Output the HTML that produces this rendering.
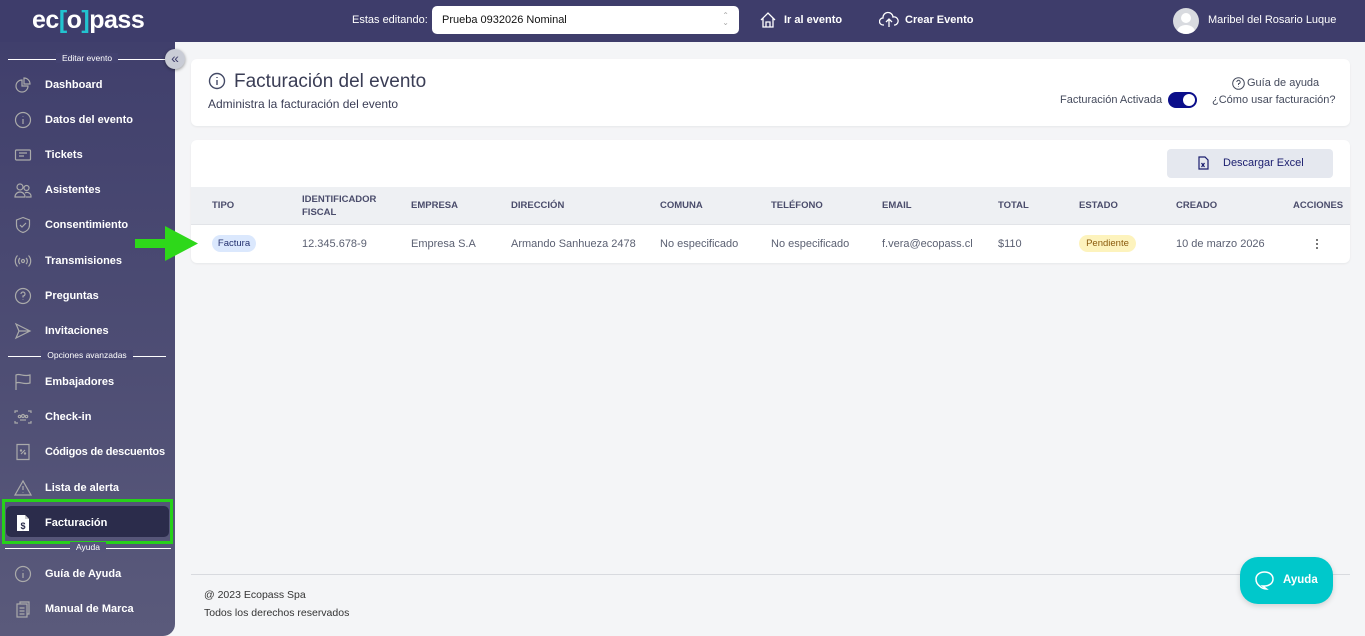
<!DOCTYPE html>
<html><head><meta charset="utf-8"><style>
*{box-sizing:border-box;margin:0;padding:0}
body{width:1365px;height:636px;overflow:hidden;background:#f4f5f7;font-family:"Liberation Sans",sans-serif;position:relative;color:#374151}
.hdr{position:absolute;left:0;top:0;width:1365px;height:42px;background:#3e3d6b}
.logo{position:absolute;left:32px;top:6px;color:#fff;font-size:25px;font-weight:bold;letter-spacing:-0.5px}
.logo b{color:#22c3d0}
.side{position:absolute;left:0;top:42px;width:175px;height:594px;background:linear-gradient(#403f6c,#5a5a7b);border-bottom-right-radius:12px}
.sec{position:absolute;left:8px;width:158px;height:12px;font-size:8.5px;color:#fff;text-align:center}
.sec:before{content:"";position:absolute;left:0;right:0;top:6px;border-top:1px solid #fff}
.sec span{position:relative;background:#434270;padding:0 6px}
.it{position:absolute;left:0;width:175px;height:30px;display:flex;align-items:center;color:#fff;font-size:11px;font-weight:bold}
.it svg{position:absolute;left:14px;width:18px;height:18px}
.it span{position:absolute;left:45px;white-space:nowrap}
.act{position:absolute;left:2px;top:499px;width:171px;height:45px;border:3px solid #27d11a}
.act div{position:absolute;left:1px;top:4px;width:163px;height:31px;background:#2b2c4b;border-radius:5px}
.card{position:absolute;background:#fff;border-radius:6px;box-shadow:0 1px 2px rgba(0,0,0,.06)}
.th{position:absolute;font-size:9.5px;font-weight:bold;color:#4a4c6b;line-height:13px}
.td{position:absolute;font-size:11px;color:#5b6072;top:238px}
</style></head><body>
<div class="hdr">
<div class="logo">ec<b>[</b>o<b>]</b>pass</div>
<div style="position:absolute;left:352px;top:14px;color:#fff;font-size:11px">Estas editando:</div>
<div style="position:absolute;left:432px;top:6px;width:307px;height:28px;background:#fff;border-radius:5px;font-size:11px;color:#111;padding:8px 10px">Prueba 0932026 Nominal<span style="position:absolute;right:10px;top:6px;color:#aaa;font-size:8px;line-height:7px">⌃<br>⌄</span></div>
<svg style="position:absolute;left:759px;top:11px" width="18" height="18" viewBox="0 0 18 18" fill="none" stroke="#fff" stroke-width="1.3"><path d="M2 9 9 2l7 7M4 7v9h10V7M7 16v-5h4v5"/></svg>
<div style="position:absolute;left:784px;top:14px;color:#fff;font-size:11px;font-weight:bold">Ir al evento</div>
<svg style="position:absolute;left:879px;top:11px" width="20" height="18" viewBox="0 0 20 18" fill="none" stroke="#fff" stroke-width="1.3"><path d="M5 14H4a3.5 3.5 0 0 1 0-7 5 5 0 0 1 10-1 4 4 0 0 1 2 8h-1M10 16V9M7 11l3-3 3 3"/></svg>
<div style="position:absolute;left:905px;top:14px;color:#fff;font-size:11px;font-weight:bold">Crear Evento</div>
<div style="position:absolute;left:1173px;top:8px;width:26px;height:26px;border-radius:50%;background:#d9dbe0;overflow:hidden"><div style="position:absolute;left:8px;top:5px;width:10px;height:10px;border-radius:50%;background:#fff"></div><div style="position:absolute;left:4px;top:17px;width:18px;height:14px;border-radius:50%;background:#fff"></div></div>
<div style="position:absolute;left:1208px;top:14px;color:#fff;font-size:11px">Maribel del Rosario Luque</div>
</div>
<div class="side">
<div class="sec" style="top:11px"><span>Editar evento</span></div>
<div style="position:absolute;left:165px;top:7px;width:20px;height:20px;border-radius:50%;background:#c9ccd6;color:#3e3d6b;font-size:14px;text-align:center;line-height:18px;box-shadow:0 1px 3px rgba(0,0,0,.4)">«</div>
</div>
<div class="act"><div></div></div>
<div class="it" style="top:70px"><svg viewBox="0 0 18 18" fill="none" stroke="#aaa" stroke-width="1.2"><path d="M8 4a6 6 0 1 0 6 6H8z M10 2a6 6 0 0 1 6 6h-6z"/></svg><span>Dashboard</span></div>
<div class="it" style="top:105px"><svg viewBox="0 0 18 18" fill="none" stroke="#aaa" stroke-width="1.2"><circle cx="9" cy="9" r="7.5"/><path d="M9 8v5M9 5.5v.5"/></svg><span>Datos del evento</span></div>
<div class="it" style="top:140px"><svg viewBox="0 0 18 18" fill="none" stroke="#aaa" stroke-width="1.2"><rect x="1.5" y="4" width="15" height="10" rx="1"/><path d="M5 7h8M5 10h5"/></svg><span>Tickets</span></div>
<div class="it" style="top:175px"><svg viewBox="0 0 18 18" fill="none" stroke="#aaa" stroke-width="1.2"><circle cx="6" cy="6" r="3"/><circle cx="12.5" cy="7" r="2.5"/><path d="M1 16a5 5 0 0 1 10 0zM11 12a4 4 0 0 1 6 4h-5"/></svg><span>Asistentes</span></div>
<div class="it" style="top:210px"><svg viewBox="0 0 18 18" fill="none" stroke="#aaa" stroke-width="1.2"><path d="M9 1.5 2.5 4v5c0 4 3 6.5 6.5 7.5 3.5-1 6.5-3.5 6.5-7.5V4zM6 9l2 2 4-4"/></svg><span>Consentimiento</span></div>
<div class="it" style="top:246px"><svg viewBox="0 0 18 18" fill="none" stroke="#aaa" stroke-width="1.2"><circle cx="9" cy="9" r="1.5"/><path d="M6 6a4 4 0 0 0 0 6M12 6a4 4 0 0 1 0 6M3.5 3.5a8 8 0 0 0 0 11M14.5 3.5a8 8 0 0 1 0 11"/></svg><span>Transmisiones</span></div>
<div class="it" style="top:281px"><svg viewBox="0 0 18 18" fill="none" stroke="#aaa" stroke-width="1.2"><circle cx="9" cy="9" r="7.5"/><path d="M7 7a2 2 0 1 1 2 2v1.5M9 12.5v.5"/></svg><span>Preguntas</span></div>
<div class="it" style="top:316px"><svg viewBox="0 0 18 18" fill="none" stroke="#aaa" stroke-width="1.2"><path d="M2 2l14 7-14 7 3-7zM5 9h11"/></svg><span>Invitaciones</span></div>
<div class="sec" style="top:350px"><span style="background:#484772">Opciones avanzadas</span></div>
<div class="it" style="top:367px"><svg viewBox="0 0 18 18" fill="none" stroke="#aaa" stroke-width="1.2"><path d="M2 17V2c4-2 7 2 14 0v8c-7 2-10-2-14 0"/></svg><span>Embajadores</span></div>
<div class="it" style="top:402px"><svg viewBox="0 0 18 18" fill="none" stroke="#aaa" stroke-width="1.2"><path d="M1 5V3h3M14 3h3v2M1 13v2h3M14 15h3v-2"/><circle cx="9" cy="8" r="1.5"/><circle cx="5.5" cy="8.5" r="1.2"/><circle cx="12.5" cy="8.5" r="1.2"/><path d="M6 12h6"/></svg><span>Check-in</span></div>
<div class="it" style="top:437px"><svg viewBox="0 0 18 18" fill="none" stroke="#aaa" stroke-width="1.2"><path d="M3 1.5h12v15H3zM7 11l4-4"/><circle cx="7" cy="7.5" r=".6"/><circle cx="11" cy="10.5" r=".6"/></svg><span style="letter-spacing:-0.2px">Códigos de descuentos</span></div>
<div class="it" style="top:473px"><svg viewBox="0 0 18 18" fill="none" stroke="#aaa" stroke-width="1.2"><path d="M9 2 1 16h16zM9 7v4M9 13v.5"/></svg><span>Lista de alerta</span></div>
<div class="it" style="top:508px"><svg viewBox="0 0 18 18"><path d="M3 1h8l4 4v12H3z" fill="#fff"/><path d="M11 1v4h4" fill="#ccc"/><text x="9" y="15" font-size="9" font-weight="bold" text-anchor="middle" fill="#2b2c4b" font-family="Liberation Sans">$</text></svg><span>Facturación</span></div>
<div class="sec" style="top:542px;left:5px;width:166px"><span style="background:#55557a">Ayuda</span></div>
<div class="it" style="top:559px"><svg viewBox="0 0 18 18" fill="none" stroke="#aaa" stroke-width="1.2"><circle cx="9" cy="9" r="7.5"/><path d="M9 8v5M9 5.5v.5"/></svg><span>Guía de Ayuda</span></div>
<div class="it" style="top:594px"><svg viewBox="0 0 18 18" fill="none" stroke="#aaa" stroke-width="1.2"><rect x="3" y="4" width="10" height="13"/><path d="M6 4V2h9v12h-2M5.5 8h5M5.5 11h5M5.5 14h5"/></svg><span>Manual de Marca</span></div>

<div class="card" style="left:191px;top:59px;width:1159px;height:67px">
<svg style="position:absolute;left:17px;top:13px" width="18" height="18" viewBox="0 0 18 18" fill="none" stroke="#444a66" stroke-width="1.4"><circle cx="9" cy="9" r="7.5"/><path d="M9 8v5M9 5v1"/></svg>
<div style="position:absolute;left:43px;top:12px;font-size:19px;color:#3a3d55">Facturación del evento</div>
<div style="position:absolute;left:17px;top:38px;font-size:12px;color:#3a3d55">Administra la facturación del evento</div>
<div style="position:absolute;left:869px;top:35px;font-size:11px;color:#444a5c">Facturación Activada</div>
<div style="position:absolute;left:977px;top:33px;width:29px;height:16px;border-radius:8px;background:#0b0e8a"><div style="position:absolute;right:2px;top:2px;width:12px;height:12px;border-radius:50%;background:#fff"></div></div>
<svg style="position:absolute;left:1041px;top:18px" width="13" height="13" viewBox="0 0 13 13" fill="#fff" stroke="#444a5c"><circle cx="6.5" cy="6.5" r="5.8"/><path d="M4.8 5a1.7 1.7 0 1 1 1.7 1.7V8M6.5 9.5v.5" fill="none"/></svg>
<div style="position:absolute;left:1056px;top:18px;font-size:11px;color:#444a5c">Guía de ayuda</div>
<div style="position:absolute;left:1021px;top:35px;font-size:11px;color:#444a5c">¿Cómo usar facturación?</div>
</div>

<div class="card" style="left:191px;top:140px;width:1159px;height:123px;overflow:hidden">
<div style="position:absolute;left:976px;top:9px;width:166px;height:29px;background:#e5e8ef;border-radius:4px;font-size:11px;color:#1a1d6e;padding:8px 0 0 56px">Descargar Excel</div>
<svg style="position:absolute;left:1007px;top:16px" width="11" height="14" viewBox="0 0 11 14" fill="none" stroke="#1a1d6e" stroke-width="1.2"><path d="M1 1h6l3 3v9H1z"/><path d="M3.5 7l3 4M6.5 7l-3 4"/></svg>
<div style="position:absolute;left:0;top:47px;width:1159px;height:38px;background:#eef0f3;border-bottom:1px solid #e2e4e8"></div>
</div>
<div class="th" style="left:212px;top:199px">TIPO</div>
<div class="th" style="left:302px;top:193px">IDENTIFICADOR<br>FISCAL</div>
<div class="th" style="left:411px;top:199px">EMPRESA</div>
<div class="th" style="left:511px;top:199px">DIRECCIÓN</div>
<div class="th" style="left:660px;top:199px">COMUNA</div>
<div class="th" style="left:771px;top:199px">TELÉFONO</div>
<div class="th" style="left:882px;top:199px">EMAIL</div>
<div class="th" style="left:998px;top:199px">TOTAL</div>
<div class="th" style="left:1079px;top:199px">ESTADO</div>
<div class="th" style="left:1176px;top:199px">CREADO</div>
<div class="th" style="left:1293px;top:199px">ACCIONES</div>
<div style="position:absolute;left:212px;top:235px;width:44px;height:17px;border-radius:9px;background:#dbe8fd;color:#23306e;font-size:9.5px;text-align:center;line-height:17px">Factura</div>
<div class="td" style="left:302px">12.345.678-9</div>
<div class="td" style="left:411px">Empresa S.A</div>
<div class="td" style="left:511px">Armando Sanhueza 2478</div>
<div class="td" style="left:660px">No especificado</div>
<div class="td" style="left:771px">No especificado</div>
<div class="td" style="left:882px">f.vera@ecopass.cl</div>
<div class="td" style="left:998px">$110</div>
<div style="position:absolute;left:1079px;top:235px;width:57px;height:17px;border-radius:9px;background:#fdf3bd;color:#8a5a0c;font-size:9.5px;text-align:center;line-height:17px">Pendiente</div>
<div class="td" style="left:1176px">10 de marzo 2026</div>
<div style="position:absolute;left:1316px;top:239px;width:2px;font-size:0">
<div style="width:2px;height:2px;background:#777;margin-bottom:2px"></div><div style="width:2px;height:2px;background:#777;margin-bottom:2px"></div><div style="width:2px;height:2px;background:#777"></div></div>
<svg style="position:absolute;left:135px;top:226px" width="63" height="35" viewBox="0 0 63 35"><path d="M0 13h30V0l33 17.5L30 35V22H0z" fill="#2ed81a"/></svg>

<div style="position:absolute;left:191px;top:574px;width:1159px;border-top:1px solid #d8dadf"></div>
<div style="position:absolute;left:204px;top:589px;font-size:10.5px;color:#333">@ 2023 Ecopass Spa</div>
<div style="position:absolute;left:204px;top:607px;font-size:10.5px;color:#333">Todos los derechos reservados</div>
<div style="position:absolute;left:1240px;top:557px;width:93px;height:47px;border-radius:18px;background:#00c8cb;box-shadow:0 2px 6px rgba(0,0,0,.15)">
<svg style="position:absolute;left:14px;top:13px" width="21" height="21" viewBox="0 0 21 21" fill="none" stroke="#fff" stroke-width="1.5"><path d="M10.5 2c5 0 8.5 3 8.5 7s-3.5 7-8.5 7c-1 0-1.5 0-2 0l4 3c-2 0-5-1-7-3-2-1.5-3.5-3.5-3.5-7 0-4 3.5-7 8.5-7z"/></svg>
<div style="position:absolute;left:43px;top:17px;color:#fff;font-size:11.5px;font-weight:bold">Ayuda</div></div>
</body></html>
